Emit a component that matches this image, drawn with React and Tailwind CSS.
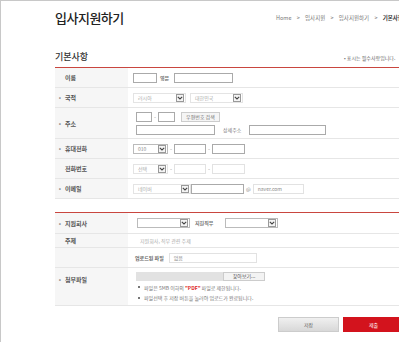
import React from 'react';

const Chevron = () => (
    <span className="flex items-center justify-center w-[8px] h-[8px] border border-[#999] bg-[#f4f4f4] shrink-0">
        <svg width="6" height="4" viewBox="0 0 6 4"><path d="M0.8 0.8 L3 3 L5.2 0.8" stroke="#444" strokeWidth="1.1" fill="none" /></svg>
    </span>
);

const Select = ({ w, text, light }) => (
    <div className={`flex items-center justify-between h-[10px] pl-[4px] pr-[1px] bg-white border ${light ? 'border-[#e4e4e4] text-[#aaa]' : 'border-[#bbb] text-[#888]'} ${w}`}>
        <span className="text-[5px] leading-none">{text}</span>
        <Chevron />
    </div>
);

const Input = ({ w, text, light }) => (
    <div className={`flex items-center h-[10px] px-[4px] bg-white border ${light ? 'border-[#e2e2e2]' : 'border-[#aaa]'} ${w}`}>
        <span className="text-[5px] leading-none text-[#888]">{text}</span>
    </div>
);

const Dash = () => <span className="text-[6px] text-[#999] px-[2px]">-</span>;

const Row = ({ label, req, h, children, top }) => (
    <div className={`grid grid-cols-[73px_1fr] border-b border-[#e6e6e6] ${h}`}>
        <div className={`bg-[#f6f6f6] flex ${top ? 'items-start pt-[7px]' : 'items-center'} text-[6px] font-bold text-[#555]`}>
            <span className="w-[10px] text-center text-[#888]">{req ? '•' : ''}</span>
            <span>{label}</span>
        </div>
        <div className="flex flex-col justify-center pl-[5px]">{children}</div>
    </div>
);

export default function App() {
    return (
        <div className="w-[399px] h-[342px] overflow-hidden bg-white border-l border-t border-[#c8c8c8] font-['Noto_Sans_CJK_KR','Noto_Sans',sans-serif]">
            <div className="w-[362px] ml-[54px]">
                {/* header */}
                <div className="grid grid-cols-[221px_1fr] items-start pt-[8px] h-[42px]">
                    <h1 className="text-[13px] leading-[18px] font-medium text-[#222] tracking-[-0.5px]">입사지원하기</h1>
                    <div className="text-[5.5px] text-[#777] pt-[5px] whitespace-nowrap">
                        Home <span className="px-[4px]">&gt;</span> 입사지원 <span className="px-[4px]">&gt;</span> 입사지원하기 <span className="px-[4px]">&gt;</span> <b className="text-[#333]">기본사항</b>
                    </div>
                </div>
                <div className="grid grid-cols-[289px_1fr] items-end h-[24px] pb-[6px]">
                    <h2 className="text-[9px] leading-none font-medium text-[#333]">기본사항</h2>
                    <span className="text-[5px] text-[#666] whitespace-nowrap">• 표시는 필수사항입니다.</span>
                </div>

                {/* table 1 */}
                <div className="border-t border-[#c9463f]">
                    <Row label="이름" h="h-[20px]">
                        <div className="flex items-center">
                            <Input w="w-[24px]" />
                            <span className="text-[5px] font-bold text-[#777] ml-[3px] mr-[5px]">영문</span>
                            <Input w="w-[59px]" />
                        </div>
                    </Row>
                    <Row label="국적" req h="h-[20px]">
                        <div className="flex items-center gap-[4px]">
                            <Select w="w-[53px]" text="러시아" light />
                            <Select w="w-[53px]" text="대한민국" light />
                        </div>
                    </Row>
                    <Row label="주소" req h="h-[31px]">
                        <div className="flex flex-col gap-[3px] pl-[3px]">
                            <div className="flex items-center">
                                <Input w="w-[16px]" />
                                <Dash />
                                <Input w="w-[17px]" />
                                <div className="ml-[6px] h-[10px] px-[4px] flex items-center border border-[#ccc] bg-[#f5f5f5] text-[5px] text-[#777]">우편번호 검색</div>
                            </div>
                            <div className="flex items-center">
                                <Input w="w-[79px]" />
                                <span className="text-[5px] text-[#777] ml-[8px] mr-[8px]">상세주소</span>
                                <Input w="w-[77px]" />
                            </div>
                        </div>
                    </Row>
                    <Row label="휴대전화" req h="h-[20px]">
                        <div className="flex items-center">
                            <Select w="w-[35px]" text="010" />
                            <Dash />
                            <Input w="w-[32px]" />
                            <Dash />
                            <Input w="w-[33px]" />
                        </div>
                    </Row>
                    <Row label="전화번호" h="h-[20px]">
                        <div className="flex items-center">
                            <Select w="w-[35px]" text="선택" light />
                            <Dash />
                            <Input w="w-[32px]" light />
                            <Dash />
                            <Input w="w-[33px]" light />
                        </div>
                    </Row>
                    <Row label="이메일" req h="h-[20px]">
                        <div className="flex items-center">
                            <Select w="w-[58px]" text="네이버" light />
                            <Input w="w-[53px]" />
                            <span className="text-[5px] text-[#777] px-[2px]">@</span>
                            <Input w="w-[51px]" text="naver.com" light />
                        </div>
                    </Row>
                </div>

                {/* table 2 */}
                <div className="mt-[13px] border-t border-[#c9463f]">
                    <Row label="지원회사" req h="h-[21px]">
                        <div className="flex items-center pl-[4px]">
                            <Select w="w-[53px]" />
                            <span className="text-[5px] font-bold text-[#777] ml-[5px] mr-[12px]">지원직무</span>
                            <Select w="w-[53px]" />
                        </div>
                    </Row>
                    <Row label="주제" h="h-[14px]">
                        <span className="text-[5px] text-[#aaa] pl-[7px]">지원회사, 직무 관련 주제</span>
                    </Row>
                    <Row label="" h="h-[20px]">
                        <div className="flex items-center pl-[2px]">
                            <span className="text-[5px] font-bold text-[#666] mr-[5px]">업로드된 파일</span>
                            <Input w="w-[88px]" text="없음" light />
                        </div>
                    </Row>
                    <Row label="첨부파일" req h="h-[38px]" top>
                        <div className="flex flex-col pl-[3px]">
                            <div className="flex items-center">
                                <div className="w-[87px] h-[9px] bg-[#e2e2e2]" />
                                <div className="w-[42px] h-[9px] flex items-center justify-center border border-[#ccc] bg-[#f3f3f3] text-[5px] text-[#555]">찾아보기...</div>
                            </div>
                            <div className="flex items-center mt-[3px] text-[5px] text-[#777]">
                                <span className="w-[2px] h-[2px] bg-[#777] mx-[2px] mr-[4px]" />
                                파일은 5MB 이하의 <b className="text-[#d22] px-[1px]">"PDF"</b>파일로 제한됩니다.
                            </div>
                            <div className="flex items-center mt-[3px] text-[5px] text-[#777]">
                                <span className="w-[2px] h-[2px] bg-[#777] mx-[2px] mr-[4px]" />
                                파일선택 후 저장 버튼을 눌러야 업로드가 완료됩니다.
                            </div>
                        </div>
                    </Row>
                </div>

                {/* buttons */}
                <div className="flex justify-end gap-[4px] mt-[11px] pr-[1px]">
                    <button className="w-[61px] h-[15px] bg-gradient-to-b from-[#f0f0f0] to-[#d8d8d8] border border-[#ccc] text-[5px] text-[#666]">저장</button>
                    <button className="w-[73px] h-[15px] bg-[#d3131d] text-[5px] text-white pr-[12px]">제출</button>
                </div>
            </div>
        </div>
    );
}
